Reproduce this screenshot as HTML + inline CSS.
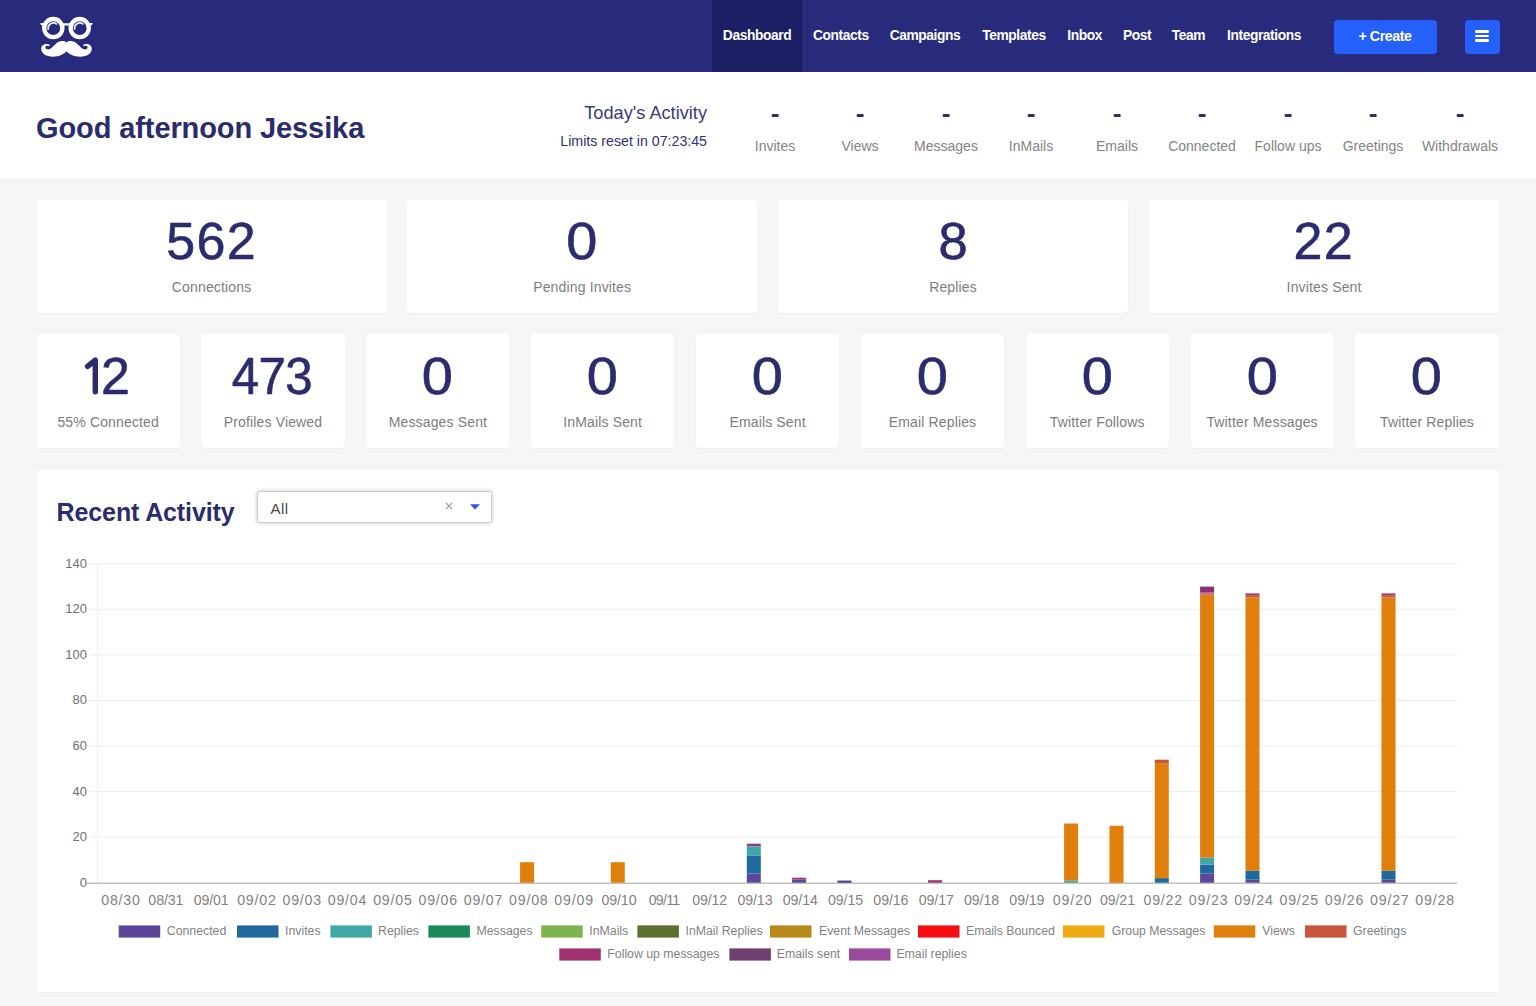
<!DOCTYPE html>
<html>
<head>
<meta charset="utf-8">
<title>Dashboard</title>
<style>
*{box-sizing:border-box;margin:0;padding:0}
html,body{width:1536px;height:1006px;overflow:hidden}
body{position:relative;background:#f6f6f6;font-family:"Liberation Sans",sans-serif;color:#2b2d6e}
.abs{position:absolute}
/* NAV */
#nav{position:absolute;left:0;top:0;width:1536px;height:72px;background:#282b7c}
#tab{position:absolute;left:712px;top:0;width:90px;height:72px;background:#1d1f65}
.nl{position:absolute;top:27px;height:18px;line-height:18px;font-size:13.8px;font-weight:bold;color:#fff;white-space:nowrap;transform:translateX(-50%);letter-spacing:-0.42px}
#create{position:absolute;left:1333.5px;top:19.5px;width:103px;height:34.3px;background:#2660fa;border-radius:4px;color:#fff;font-size:14.2px;font-weight:bold;text-align:center;line-height:33.8px;letter-spacing:-0.4px}
#burger{position:absolute;left:1465.2px;top:19.5px;width:34.5px;height:34.3px;background:#2660fa;border-radius:4px}
#burger i{position:absolute;left:10px;width:13.4px;height:2.6px;background:#fff;border-radius:1px}
/* HEADER */
#hdr{position:absolute;left:0;top:72px;width:1536px;height:106px;background:#fff}
#greet{position:absolute;left:36px;top:109.7px;font-size:29px;font-weight:bold;line-height:36px;white-space:nowrap;color:#2a2c6c;letter-spacing:-0.1px}
#ta{position:absolute;right:829px;top:102.4px;font-size:18.2px;line-height:22px;white-space:nowrap;color:#3a3c78}
#lim{position:absolute;right:829px;top:133px;font-size:14.2px;letter-spacing:0px;line-height:16px;white-space:nowrap;color:#2f3275}
.sd{position:absolute;top:114px;width:6.6px;height:2.6px;background:#2b2d6e;border-radius:1px;transform:translateX(-50%)}
.sl{position:absolute;top:137.5px;font-size:14px;line-height:16px;color:#848484;white-space:nowrap;transform:translateX(-50%)}
/* CARDS */
.card{position:absolute;background:#fff;border-radius:4px;box-shadow:0 1px 2px rgba(0,0,0,0.04)}
.num{position:absolute;left:0;width:100%;text-align:center;font-size:52px;line-height:60px;color:#2a2c6e;-webkit-text-stroke:0.6px #2a2c6e;white-space:nowrap;letter-spacing:1.3px;padding-left:1.3px}
.lab{position:absolute;left:0;width:100%;text-align:center;font-size:14px;letter-spacing:0.15px;line-height:16px;color:#7d7d7d;white-space:nowrap}
.big{top:199.6px;height:113.4px}
.big .num{top:11.4px}
.big .lab{top:79.4px}
.sm{top:334.4px;height:113.2px}
.sm .num{top:11.6px}
.sm .lab{top:79.6px}
/* PANEL */
#panel{position:absolute;left:36.6px;top:469.6px;width:1462.6px;height:522px;background:#fff;border-radius:4px;box-shadow:0 1px 2px rgba(0,0,0,0.04)}
#ra{position:absolute;left:56.6px;top:494.8px;font-size:25px;font-weight:bold;line-height:34px;white-space:nowrap;color:#2a2c6c;letter-spacing:-0.12px}
#sel{position:absolute;left:257px;top:491px;width:235px;height:32px;background:#fff;border:1.5px solid #c9c9c9;border-radius:2.5px;box-shadow:0 0 4px rgba(0,0,0,0.22)}
#sel span{position:absolute;left:12.4px;top:8.9px;font-size:15px;letter-spacing:0.5px;line-height:16px;color:#484848}
.yl{font-size:13px;fill:#707070;font-family:"Liberation Sans",sans-serif}
.xl{font-size:14.2px;fill:#828282;font-family:"Liberation Sans",sans-serif}
.lg{font-size:12.3px;fill:#828282;font-family:"Liberation Sans",sans-serif}
</style>
</head>
<body>
<div id="nav">
  <div id="tab"></div>
  <svg class="abs" style="left:34px;top:10px" width="66" height="54" viewBox="34 10 66 54">
<g fill="none" stroke="#fff" stroke-width="4.3"><circle cx="53.3" cy="28.1" r="9.1"/><circle cx="79.7" cy="28.1" r="9.1"/></g>
<path d="M62 23.2H71V26.2C69 25.4 64 25.4 62 26.2Z" fill="#fff"/>
<path d="M43.6 23L40.3 23.1L40.9 24.9L43.1 25.7Z" fill="#fff"/>
<path d="M89.4 23L92.7 23.1L92.1 24.9L89.9 25.7Z" fill="#fff"/>
<g fill="none" stroke="#eceeff" stroke-width="1.7" stroke-linecap="round"><path d="M48.2 29.2A5.3 5.3 0 0 1 56.4 23.9"/><path d="M74.6 29.2A5.3 5.3 0 0 1 82.8 23.9"/></g>
<path d="M66.50 42.40C65.30 41.20 63.80 40.90 62.00 40.90C58.30 40.90 55.50 44.00 53.00 46.40C51.40 48.00 50.00 49.40 48.00 49.40C46.30 49.40 45.40 48.50 45.40 47.50C45.40 46.30 46.50 45.60 47.60 45.80C48.50 46.00 49.30 46.30 49.70 45.60C50.10 44.80 49.00 44.00 47.00 44.00C43.50 44.00 41.20 46.00 41.20 48.80C41.20 53.50 46.00 56.70 53.00 56.70C59.00 56.70 63.50 54.50 66.50 51.30C69.50 54.50 74.00 56.70 80.00 56.70C87.00 56.70 91.80 53.50 91.80 48.80C91.80 46.00 89.50 44.00 86.00 44.00C84.00 44.00 82.90 44.80 83.30 45.60C83.70 46.30 84.50 46.00 85.40 45.80C86.50 45.60 87.60 46.30 87.60 47.50C87.60 48.50 86.70 49.40 85.00 49.40C83.00 49.40 81.60 48.00 80.00 46.40C77.50 44.00 74.70 40.90 71.00 40.90C69.20 40.90 67.70 41.20 66.50 42.40Z" fill="#fff"/>
</svg>
  <div class="nl" style="left:757px">Dashboard</div>
  <div class="nl" style="left:840.8px">Contacts</div>
  <div class="nl" style="left:925px">Campaigns</div>
  <div class="nl" style="left:1014px">Templates</div>
  <div class="nl" style="left:1084.7px">Inbox</div>
  <div class="nl" style="left:1137px">Post</div>
  <div class="nl" style="left:1188.4px">Team</div>
  <div class="nl" style="left:1264px">Integrations</div>
  <div id="create">+ Create</div>
  <div id="burger"><i style="top:10.8px"></i><i style="top:15.3px"></i><i style="top:19.9px"></i></div>
</div>
<div id="hdr"></div>
<div id="greet">Good afternoon Jessika</div>
<div id="ta">Today's Activity</div>
<div id="lim">Limits reset in 07:23:45</div>
<div class="sd" style="left:775px"></div><div class="sl" style="left:775px">Invites</div>
<div class="sd" style="left:860px"></div><div class="sl" style="left:860px">Views</div>
<div class="sd" style="left:946px"></div><div class="sl" style="left:946px">Messages</div>
<div class="sd" style="left:1031px"></div><div class="sl" style="left:1031px">InMails</div>
<div class="sd" style="left:1117px"></div><div class="sl" style="left:1117px">Emails</div>
<div class="sd" style="left:1202px"></div><div class="sl" style="left:1202px">Connected</div>
<div class="sd" style="left:1288px"></div><div class="sl" style="left:1288px">Follow ups</div>
<div class="sd" style="left:1373px"></div><div class="sl" style="left:1373px">Greetings</div>
<div class="sd" style="left:1460px"></div><div class="sl" style="left:1460px">Withdrawals</div>

<div class="card big" style="left:36.6px;width:350px"><div class="num" style="letter-spacing:1.3px;padding-left:1.3px;transform:translateX(-0.6px) scaleX(1.0)">562</div><div class="lab">Connections</div></div>
<div class="card big" style="left:407.2px;width:350px"><div class="num" style="letter-spacing:0px;padding-left:0px;transform:translateX(-0.3px) scaleX(1.075)">0</div><div class="lab">Pending Invites</div></div>
<div class="card big" style="left:778px;width:350px"><div class="num" style="letter-spacing:0px;padding-left:0px;transform:translateX(0px) scaleX(1.01)">8</div><div class="lab">Replies</div></div>
<div class="card big" style="left:1149px;width:350.2px"><div class="num" style="letter-spacing:1.3px;padding-left:1.3px;transform:translateX(-1.0px) scaleX(1.0)">22</div><div class="lab">Invites Sent</div></div>
<div class="card sm" style="left:36.6px;width:143.2px"><div class="num" style="letter-spacing:0;padding-left:0;transform:translateX(7.2px)">2</div><svg class="abs" style="left:-36.6px;top:-334.4px" width="200" height="420" viewBox="0 0 200 420"><path d="M87.6 366.4L95.3 360.2V391.8" fill="none" stroke="#2a2c6e" stroke-width="5.4" stroke-linecap="round" stroke-linejoin="round"/></svg><div class="lab">55% Connected</div></div>
<div class="card sm" style="left:201.4px;width:143.2px"><div class="num" style="letter-spacing:-0.7px;padding-left:-0.7px;transform:translateX(-1.4px) scaleX(0.945)">473</div><div class="lab">Profiles Viewed</div></div>
<div class="card sm" style="left:366.3px;width:143.2px"><div class="num" style="letter-spacing:0px;padding-left:0px;transform:translateX(-0.3px) scaleX(1.075)">0</div><div class="lab">Messages Sent</div></div>
<div class="card sm" style="left:531.1px;width:143.2px"><div class="num" style="letter-spacing:0px;padding-left:0px;transform:translateX(-0.3px) scaleX(1.075)">0</div><div class="lab">InMails Sent</div></div>
<div class="card sm" style="left:696.0px;width:143.2px"><div class="num" style="letter-spacing:0px;padding-left:0px;transform:translateX(-0.3px) scaleX(1.075)">0</div><div class="lab">Emails Sent</div></div>
<div class="card sm" style="left:860.9px;width:143.2px"><div class="num" style="letter-spacing:0px;padding-left:0px;transform:translateX(-0.3px) scaleX(1.075)">0</div><div class="lab">Email Replies</div></div>
<div class="card sm" style="left:1025.7px;width:143.2px"><div class="num" style="letter-spacing:0px;padding-left:0px;transform:translateX(-0.3px) scaleX(1.075)">0</div><div class="lab">Twitter Follows</div></div>
<div class="card sm" style="left:1190.5px;width:143.2px"><div class="num" style="letter-spacing:0px;padding-left:0px;transform:translateX(-0.3px) scaleX(1.075)">0</div><div class="lab">Twitter Messages</div></div>
<div class="card sm" style="left:1355.4px;width:143.2px"><div class="num" style="letter-spacing:0px;padding-left:0px;transform:translateX(-0.3px) scaleX(1.075)">0</div><div class="lab">Twitter Replies</div></div>

<div id="panel"></div>
<div id="ra">Recent Activity</div>
<div id="sel"><span>All</span></div>
<svg class="abs" style="left:0;top:0" width="1536" height="1006" viewBox="0 0 1536 1006">
<rect x="89.5" y="836.6" width="1367.5" height="1" fill="#eeeeee"/>
<rect x="89.5" y="791.1" width="1367.5" height="1" fill="#eeeeee"/>
<rect x="89.5" y="745.5" width="1367.5" height="1" fill="#eeeeee"/>
<rect x="89.5" y="700.0" width="1367.5" height="1" fill="#eeeeee"/>
<rect x="89.5" y="654.4" width="1367.5" height="1" fill="#eeeeee"/>
<rect x="89.5" y="608.8" width="1367.5" height="1" fill="#eeeeee"/>
<rect x="89.5" y="563.3" width="1367.5" height="1" fill="#eeeeee"/>
<rect x="97.0" y="563.8" width="1" height="324.9" fill="#f0f0f0"/>
<rect x="87.0" y="882.6" width="1370.0" height="1.2" fill="#b0b0b0"/>
<text x="87" y="886.6" text-anchor="end" class="yl">0</text>
<text x="87" y="841.0" text-anchor="end" class="yl">20</text>
<text x="87" y="795.5" text-anchor="end" class="yl">40</text>
<text x="87" y="749.9" text-anchor="end" class="yl">60</text>
<text x="87" y="704.4" text-anchor="end" class="yl">80</text>
<text x="87" y="658.8" text-anchor="end" class="yl">100</text>
<text x="87" y="613.2" text-anchor="end" class="yl">120</text>
<text x="87" y="567.7" text-anchor="end" class="yl">140</text>
<text x="120.6" y="905" text-anchor="middle" class="xl" textLength="38.7" lengthAdjust="spacing">08/30</text>
<text x="165.9" y="905" text-anchor="middle" class="xl" textLength="35.1" lengthAdjust="spacing">08/31</text>
<text x="211.2" y="905" text-anchor="middle" class="xl" textLength="35.1" lengthAdjust="spacing">09/01</text>
<text x="256.5" y="905" text-anchor="middle" class="xl" textLength="38.7" lengthAdjust="spacing">09/02</text>
<text x="301.8" y="905" text-anchor="middle" class="xl" textLength="38.7" lengthAdjust="spacing">09/03</text>
<text x="347.1" y="905" text-anchor="middle" class="xl" textLength="38.7" lengthAdjust="spacing">09/04</text>
<text x="392.5" y="905" text-anchor="middle" class="xl" textLength="38.7" lengthAdjust="spacing">09/05</text>
<text x="437.8" y="905" text-anchor="middle" class="xl" textLength="38.7" lengthAdjust="spacing">09/06</text>
<text x="483.1" y="905" text-anchor="middle" class="xl" textLength="38.7" lengthAdjust="spacing">09/07</text>
<text x="528.4" y="905" text-anchor="middle" class="xl" textLength="38.7" lengthAdjust="spacing">09/08</text>
<text x="573.7" y="905" text-anchor="middle" class="xl" textLength="38.7" lengthAdjust="spacing">09/09</text>
<text x="619.0" y="905" text-anchor="middle" class="xl" textLength="35.1" lengthAdjust="spacing">09/10</text>
<text x="664.4" y="905" text-anchor="middle" class="xl" textLength="31.5" lengthAdjust="spacing">09/11</text>
<text x="709.7" y="905" text-anchor="middle" class="xl" textLength="35.1" lengthAdjust="spacing">09/12</text>
<text x="755.0" y="905" text-anchor="middle" class="xl" textLength="35.1" lengthAdjust="spacing">09/13</text>
<text x="800.3" y="905" text-anchor="middle" class="xl" textLength="35.1" lengthAdjust="spacing">09/14</text>
<text x="845.6" y="905" text-anchor="middle" class="xl" textLength="35.1" lengthAdjust="spacing">09/15</text>
<text x="890.9" y="905" text-anchor="middle" class="xl" textLength="35.1" lengthAdjust="spacing">09/16</text>
<text x="936.3" y="905" text-anchor="middle" class="xl" textLength="35.1" lengthAdjust="spacing">09/17</text>
<text x="981.6" y="905" text-anchor="middle" class="xl" textLength="35.1" lengthAdjust="spacing">09/18</text>
<text x="1026.9" y="905" text-anchor="middle" class="xl" textLength="35.1" lengthAdjust="spacing">09/19</text>
<text x="1072.2" y="905" text-anchor="middle" class="xl" textLength="38.7" lengthAdjust="spacing">09/20</text>
<text x="1117.5" y="905" text-anchor="middle" class="xl" textLength="35.1" lengthAdjust="spacing">09/21</text>
<text x="1162.8" y="905" text-anchor="middle" class="xl" textLength="38.7" lengthAdjust="spacing">09/22</text>
<text x="1208.2" y="905" text-anchor="middle" class="xl" textLength="38.7" lengthAdjust="spacing">09/23</text>
<text x="1253.5" y="905" text-anchor="middle" class="xl" textLength="38.7" lengthAdjust="spacing">09/24</text>
<text x="1298.8" y="905" text-anchor="middle" class="xl" textLength="38.7" lengthAdjust="spacing">09/25</text>
<text x="1344.1" y="905" text-anchor="middle" class="xl" textLength="38.7" lengthAdjust="spacing">09/26</text>
<text x="1389.4" y="905" text-anchor="middle" class="xl" textLength="38.7" lengthAdjust="spacing">09/27</text>
<text x="1434.7" y="905" text-anchor="middle" class="xl" textLength="38.7" lengthAdjust="spacing">09/28</text>
<rect x="520.1" y="862.2" width="14.0" height="20.5" fill="#e07f0b"/>
<rect x="610.8" y="862.2" width="14.0" height="20.5" fill="#e07f0b"/>
<rect x="746.8" y="873.6" width="14.0" height="9.1" fill="#5b4699"/>
<rect x="746.8" y="855.4" width="14.0" height="18.2" fill="#1f6a9c"/>
<rect x="746.8" y="846.5" width="14.0" height="8.9" fill="#3fa8a6"/>
<rect x="746.8" y="843.7" width="14.0" height="2.7" fill="#7d4582"/>
<rect x="792.1" y="879.5" width="14.0" height="3.2" fill="#5b4699"/>
<rect x="792.1" y="877.7" width="14.0" height="1.8" fill="#a2316f"/>
<rect x="837.5" y="880.6" width="14.0" height="2.1" fill="#3f3f80"/>
<rect x="928.1" y="880.2" width="14.0" height="2.5" fill="#a2316f"/>
<rect x="1064.1" y="880.4" width="14.0" height="2.3" fill="#3fa8a6"/>
<rect x="1064.1" y="823.5" width="14.0" height="57.0" fill="#e07f0b"/>
<rect x="1109.5" y="825.8" width="14.0" height="57.0" fill="#e07f0b"/>
<rect x="1154.8" y="878.1" width="14.0" height="4.6" fill="#1f6a9c"/>
<rect x="1154.8" y="763.1" width="14.0" height="115.0" fill="#e07f0b"/>
<rect x="1154.8" y="759.7" width="14.0" height="3.4" fill="#c9553f"/>
<rect x="1200.1" y="873.6" width="14.0" height="9.1" fill="#5b4699"/>
<rect x="1200.1" y="864.5" width="14.0" height="9.1" fill="#1f6a9c"/>
<rect x="1200.1" y="857.6" width="14.0" height="6.8" fill="#3fa8a6"/>
<rect x="1200.1" y="594.5" width="14.0" height="263.1" fill="#e07f0b"/>
<rect x="1200.1" y="592.5" width="14.0" height="2.1" fill="#c4657c"/>
<rect x="1200.1" y="586.6" width="14.0" height="5.9" fill="#8b2e75"/>
<rect x="1245.5" y="879.7" width="14.0" height="3.0" fill="#5b4699"/>
<rect x="1245.5" y="870.6" width="14.0" height="9.1" fill="#1f6a9c"/>
<rect x="1245.5" y="597.3" width="14.0" height="273.4" fill="#e07f0b"/>
<rect x="1245.5" y="595.2" width="14.0" height="2.1" fill="#c9553f"/>
<rect x="1245.5" y="593.4" width="14.0" height="1.8" fill="#a03a6c"/>
<rect x="1381.5" y="879.7" width="14.0" height="3.0" fill="#5b4699"/>
<rect x="1381.5" y="870.6" width="14.0" height="9.1" fill="#1f6a9c"/>
<rect x="1381.5" y="597.3" width="14.0" height="273.4" fill="#e07f0b"/>
<rect x="1381.5" y="595.2" width="14.0" height="2.1" fill="#c9553f"/>
<rect x="1381.5" y="593.4" width="14.0" height="1.8" fill="#a03a6c"/>
<rect x="118.7" y="925.4" width="41.5" height="12.2" fill="#5b4699"/><text x="166.8" y="935" class="lg">Connected</text>
<rect x="237.0" y="925.4" width="41.5" height="12.2" fill="#1f6a9c"/><text x="285.0" y="935" class="lg">Invites</text>
<rect x="330.4" y="925.4" width="41.5" height="12.2" fill="#3fa8a6"/><text x="378.0" y="935" class="lg">Replies</text>
<rect x="428.4" y="925.4" width="41.5" height="12.2" fill="#1b8a5a"/><text x="476.5" y="935" class="lg">Messages</text>
<rect x="541.2" y="925.4" width="41.5" height="12.2" fill="#7db24e"/><text x="589.3" y="935" class="lg">InMails</text>
<rect x="637.4" y="925.4" width="41.5" height="12.2" fill="#5b6f2f"/><text x="685.5" y="935" class="lg">InMail Replies</text>
<rect x="770.0" y="925.4" width="41.5" height="12.2" fill="#b98a1b"/><text x="819.0" y="935" class="lg">Event Messages</text>
<rect x="918.0" y="925.4" width="41.5" height="12.2" fill="#f60d12"/><text x="966.0" y="935" class="lg">Emails Bounced</text>
<rect x="1063.0" y="925.4" width="41.5" height="12.2" fill="#efab15"/><text x="1111.7" y="935" class="lg">Group Messages</text>
<rect x="1213.8" y="925.4" width="41.5" height="12.2" fill="#e07f0b"/><text x="1262.3" y="935" class="lg">Views</text>
<rect x="1305.0" y="925.4" width="41.5" height="12.2" fill="#c9553f"/><text x="1353.0" y="935" class="lg">Greetings</text>
<rect x="559.3" y="948.4" width="41.5" height="12.2" fill="#a2316f"/><text x="607.3" y="958" class="lg">Follow up messages</text>
<rect x="729.4" y="948.4" width="41.5" height="12.2" fill="#6f3f6f"/><text x="776.7" y="958" class="lg">Emails sent</text>
<rect x="849.0" y="948.4" width="41.5" height="12.2" fill="#9b4a9b"/><text x="896.4" y="958" class="lg">Email replies</text>
</svg>
<svg class="abs" style="left:444.2px;top:501.3px" width="10" height="10" viewBox="0 0 10 10"><path d="M1.8 1.8L8.2 8.2M8.2 1.8L1.8 8.2" stroke="#999" stroke-width="1.1" fill="none"/></svg>
<svg class="abs" style="left:469.2px;top:502.6px" width="12" height="8" viewBox="0 0 12 8"><path d="M1 1.2H11L6 6.6Z" fill="#2a55e8"/></svg>

</body>
</html>
